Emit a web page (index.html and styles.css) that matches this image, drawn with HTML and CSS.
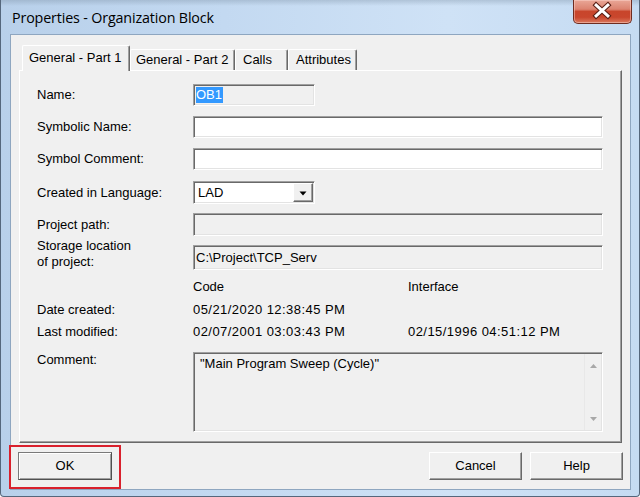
FILE: index.html
```html
<!DOCTYPE html>
<html>
<head>
<meta charset="utf-8">
<title>Properties - Organization Block</title>
<link rel="stylesheet" href="styles.css">
</head>
<body>
<div class="window">
  <div class="titlebar">
    <span class="title">Properties - Organization Block</span>
    <div class="close">
      <svg width="59" height="23" viewBox="0 0 59 23">
        <path d="M23.5 6 L35.5 17 M35.5 6 L23.5 17" stroke="#5a1e14" stroke-width="5.2" stroke-linecap="square" fill="none"/>
        <path d="M23.5 6 L35.5 17 M35.5 6 L23.5 17" stroke="#ffffff" stroke-width="3" stroke-linecap="square" fill="none"/>
      </svg>
    </div>
  </div>
  <div class="client">
    <div class="tabs">
      <div class="tab active t1">General - Part 1</div>
      <div class="tab t2">General - Part 2</div>
      <div class="tab t3">Calls</div>
      <div class="tab t4">Attributes</div>
    </div>
    <div class="panel">
      <div class="row r-name">
        <span class="lbl">Name:</span>
        <div class="field ro short"><span class="sel">OB1</span></div>
      </div>
      <div class="row r-sym">
        <span class="lbl">Symbolic Name:</span>
        <div class="field wide"></div>
      </div>
      <div class="row r-symc">
        <span class="lbl">Symbol Comment:</span>
        <div class="field wide"></div>
      </div>
      <div class="row r-lang">
        <span class="lbl">Created in Language:</span>
        <div class="field combo short">
          <span class="combo-text">LAD</span>
          <span class="drop">
            <svg width="8" height="5" viewBox="0 0 8 5"><path d="M0.5 0.5 H7.5 L4 4.5 Z" fill="#000"/></svg>
          </span>
        </div>
      </div>
      <div class="row r-path">
        <span class="lbl">Project path:</span>
        <div class="field ro wide"></div>
      </div>
      <div class="row r-store">
        <span class="lbl two">Storage location<br>of project:</span>
        <div class="field ro wide"><span class="ftext">C:\Project\TCP_Serv</span></div>
      </div>
      <div class="row r-head">
        <span></span>
        <span class="val">Code</span>
        <span class="val">Interface</span>
      </div>
      <div class="row r-date">
        <span class="lbl">Date created:</span>
        <span class="val date">05/21/2020 12:38:45 PM</span>
        <span></span>
      </div>
      <div class="row r-mod">
        <span class="lbl">Last modified:</span>
        <span class="val date">02/07/2001 03:03:43 PM</span>
        <span class="val date">02/15/1996 04:51:12 PM</span>
      </div>
      <div class="row r-comment">
        <span class="lbl">Comment:</span>
        <div class="field ro wide memo">
          <span class="memo-text">"Main Program Sweep (Cycle)"</span>
          <div class="vscroll">
            <svg width="7" height="4" viewBox="0 0 7 4"><path d="M0 4 L3.5 0 L7 4 Z" fill="#a8a8a8"/></svg>
            <svg width="7" height="4" viewBox="0 0 7 4"><path d="M0 0 L7 0 L3.5 4 Z" fill="#a8a8a8"/></svg>
          </div>
        </div>
      </div>
    </div>
    <div class="buttons">
      <div class="btn ok">OK</div>
      <div class="spacer"></div>
      <div class="btn cancel">Cancel</div>
      <div class="btn help">Help</div>
    </div>
  </div>
  <div class="highlight"></div>
</div>
</body>
</html>
```

FILE: styles.css
```css
html, body {
  margin: 0;
  padding: 0;
}

body {
  width: 640px;
  height: 497px;
  overflow: hidden;
  background: #ffffff;
  font-family: "Liberation Sans", Arial, sans-serif;
  font-size: 13px;
  color: #000;
}

.window {
  position: relative;
  width: 640px;
  height: 497px;
  box-sizing: border-box;
  display: flex;
  flex-direction: column;
  border: 1px solid #55677c;
  border-top: none;
  border-radius: 0 0 4px 4px;
  background: linear-gradient(90deg, #b8d0ea 0%, #c3d9f1 35%, #cfe2f6 70%, #c5dbf2 100%);
}

.titlebar {
  height: 34px;
  flex: none;
  display: flex;
  align-items: flex-start;
  padding-left: 11px;
  background: linear-gradient(180deg, rgba(120,140,160,0.35) 0px, rgba(190,210,232,0) 6px);
}

.title {
  font-family: "Open Sans", "Noto Sans", sans-serif;
  font-size: 14.3px;
  line-height: 20px;
  margin-top: 8px;
  color: #000;
  letter-spacing: -0.15px;
}

.close {
  margin-left: auto;
  margin-right: 7px;
  width: 59px;
  height: 24px;
  box-sizing: border-box;
  border: 1px solid #6e2c20;
  border-top: none;
  border-radius: 0 0 5px 5px;
  background: linear-gradient(180deg, #e9a797 0%, #dc8370 40%, #c8452b 50%, #c9462d 75%, #da7a5f 100%);
  box-shadow: inset 0 0 0 1px rgba(255,220,210,0.45);
  display: flex;
}

.close svg {
  display: block;
  margin-top: -1px;
  margin-left: -1px;
}

.client {
  flex: 1;
  margin: 0 8px 6px 9px;
  border: 1px solid #8ea6c0;
  background: #f0f0f0;
  display: flex;
  flex-direction: column;
}

.tabs {
  display: flex;
  align-items: flex-end;
  padding-top: 10px;
  padding-left: 11px;
  height: 25px;
  position: relative;
  z-index: 2;
}

.tab {
  box-sizing: border-box;
  height: 21px;
  background: #f0f0f0;
  border-top: 1px solid #ffffff;
  border-left: 1px solid #ffffff;
  border-right: 1px solid #696969;
  box-shadow: inset -1px 0 #a0a0a0;
  border-radius: 2px 2px 0 0;
  line-height: 19px;
  padding-left: 6px;
  white-space: nowrap;
}

.tab.active {
  height: 26px;
  margin-bottom: -1px;
  line-height: 24px;
  padding-left: 6px;
  padding-bottom: 2px;
}

.t1 { width: 108px; }
.t2 { width: 105px; padding-left: 5px; }
.t3 { width: 53px; padding-left: 7px; }
.t4 { width: 69px; padding-left: 7px; }

.panel {
  box-sizing: border-box;
  height: 373px;
  margin: 0 8px 0 8px;
  border-top: 1px solid #ffffff;
  border-left: 1px solid #ffffff;
  border-right: 1px solid #696969;
  border-bottom: 1px solid #696969;
  box-shadow: inset -1px -1px #a0a0a0;
  padding: 0 18px 0 17px;
  display: flex;
  flex-direction: column;
}

.row {
  display: grid;
  grid-template-columns: 156px 215px 195px;
  align-items: center;
}

.r-name { margin-top: 13px; height: 22px; }
.r-sym { margin-top: 10px; height: 22px; }
.r-symc { margin-top: 10px; height: 22px; }
.r-lang { margin-top: 11px; height: 23px; }
.r-path { margin-top: 9px; height: 23px; }
.r-store { margin-top: 9px; height: 23px; }
.r-head { margin-top: 11px; height: 16px; }
.r-date { margin-top: 7px; height: 16px; }
.r-mod { margin-top: 6px; height: 16px; }
.r-comment { margin-top: 12px; height: 80px; align-items: start; }

.lbl {
  line-height: 16px;
  white-space: nowrap;
}

.lbl.two {
  line-height: 16px;
  align-self: start;
  margin-top: -7px;
}

.r-comment .lbl {
  margin-top: 0;
}

.val {
  line-height: 16px;
  white-space: nowrap;
}

.date {
  letter-spacing: 0.45px;
}

.field {
  box-sizing: border-box;
  height: 100%;
  background: #ffffff;
  border: 1px solid;
  border-color: #a0a0a0 #ffffff #ffffff #a0a0a0;
  box-shadow: inset 1px 1px #696969, inset -1px -1px #e3e3e3;
  display: flex;
  align-items: center;
  position: relative;
}

.field.ro {
  background: #f0f0f0;
}

.field.short {
  grid-column: 2;
  width: 122px;
}

.field.wide {
  grid-column: 2 / 4;
}

.sel {
  margin-left: 2px;
  background: #3399ff;
  color: #ffffff;
  line-height: 16px;
  padding: 0 1px 0 0;
}

.ftext {
  margin-left: 2px;
}

.combo-text {
  margin-left: 4px;
}

.drop {
  margin-left: auto;
  margin-right: 1px;
  width: 20px;
  height: 19px;
  box-sizing: border-box;
  background: #f0f0f0;
  border: 1px solid;
  border-color: #ffffff #696969 #696969 #ffffff;
  box-shadow: inset -1px -1px #a0a0a0;
  display: flex;
  align-items: center;
  justify-content: center;
}

.drop svg {
  display: block;
  margin-top: 1px;
}

.memo {
  align-items: flex-start;
}

.memo-text {
  margin-left: 6px;
  margin-top: 3px;
  line-height: 16px;
}

.vscroll {
  position: absolute;
  right: 1px;
  top: 1px;
  bottom: 1px;
  width: 17px;
  border-left: 1px solid #e8e8e8;
  display: flex;
  flex-direction: column;
  align-items: center;
  justify-content: space-between;
  padding: 10px 0 9px;
  box-sizing: border-box;
}

.vscroll svg {
  display: block;
}

.buttons {
  display: flex;
  margin-top: 9px;
  height: 28px;
  padding: 0 7px;
  gap: 8px;
}

.spacer {
  flex: 1;
}

.btn {
  box-sizing: border-box;
  height: 28px;
  width: 93px;
  background: #f0f0f0;
  border: 1px solid;
  border-color: #ffffff #696969 #696969 #ffffff;
  box-shadow: inset -1px -1px #a0a0a0;
  display: flex;
  align-items: center;
  justify-content: center;
  line-height: 16px;
}

.btn.ok {
  width: 94px;
  border-color: #7a7a7a #505050 #505050 #7a7a7a;
  box-shadow: inset 1px 1px #ffffff, inset -1px -1px #a0a0a0;
}

.highlight {
  position: absolute;
  left: 8px;
  top: 445px;
  width: 112px;
  height: 44px;
  box-sizing: border-box;
  border: 2px solid #d9202c;
}
```
